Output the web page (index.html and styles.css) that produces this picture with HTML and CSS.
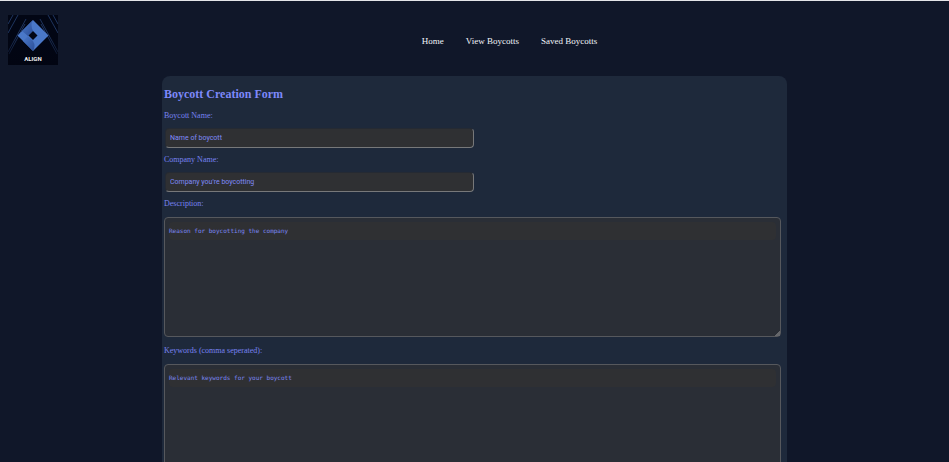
FILE: index.html
```
<!DOCTYPE html>
<html lang="en">
<head>
<meta charset="utf-8">
<meta name="viewport" content="width=device-width, initial-scale=1">
<title>Align</title>
<link rel="stylesheet" href="styles.css">
</head>
<body>
<header class="header">
  <a class="logo" href="#" aria-label="Home page">
    <svg viewBox="0 0 50 50" aria-hidden="true">
      <defs>
        <linearGradient id="fold" x1="0" y1="0" x2="1" y2="1"><stop offset="0" stop-color="#4a78c8"/><stop offset="1" stop-color="#2c4f98"/></linearGradient>
        <linearGradient id="fade" x1="0" y1="0" x2="0" y2="1"><stop offset="0" stop-color="#020512" stop-opacity="0"/><stop offset="1" stop-color="#020512"/></linearGradient>
      </defs>
      <rect width="50" height="50" fill="#020614"/>
      <g stroke="#1f355f" fill="none"><path d="M5 0L0 9M10 0L0 18M18 4L0 37M17 9L1 39M40 0l10 18M45 0l5 9M32 4l18 33M33 9l16 30"/></g>
      <rect y="20" width="50" height="30" fill="url(#fade)"/>
      <path fill="#4a78c8" d="M25 5L40.500 20.500L25 36L9.500 20.500Z"/>
      <path fill="url(#fold)" d="M25 5Q22 10 25 16L20 21L14 16Z"/>
      <path fill="url(#fold)" d="M20 21L25 26Q28 31 25 36L15 26Z"/>
      <path fill="#020614" d="M25 16L29.500 20.500L25 25L20.500 20.500Z"/>
      <text class="logo-text" x="25" y="46" text-anchor="middle">ALIGN</text>
    </svg>
  </a>
  <nav class="nav">
    <a href="#">Home</a>
    <a href="#">View Boycotts</a>
    <a href="#">Saved Boycotts</a>
  </nav>
</header>
<main class="card">
  <h1>Boycott Creation Form</h1>
  <form>
    <label for="name">Boycott Name:</label>
    <input id="name" type="text" placeholder="Name of boycott">
    <label for="company">Company Name:</label>
    <input id="company" type="text" placeholder="Company you're boycotting">
    <label for="description">Description:</label>
    <textarea id="description" placeholder="Reason for boycotting the company"></textarea>
    <label for="keywords">Keywords (comma seperated):</label>
    <textarea id="keywords" placeholder="Relevant keywords for your boycott"></textarea>
  </form>
</main>
</body>
</html>
```
FILE: styles.css
```
* { box-sizing: border-box; }
html { overflow: hidden; background: #101729; }
body {
  margin: 0;
  border-top: 1px solid #e4e5e8;
  background: #101729;
  font-family: "Liberation Serif", serif;
}
.header {
  display: flex;
  align-items: center;
  padding: 14px 8px 11px;
}
.logo { width: 50px; height: 50px; }
.logo svg { display: block; width: 100%; height: 100%; }
.logo-text { font: bold 6px Roboto, sans-serif; fill: #f0f0f0; }
.nav {
  flex: 1;
  display: flex;
  justify-content: center;
  gap: 22px;
  padding: 2px 0 0 20px;
}
.nav a { color: #f1f5f9; font-size: 9px; line-height: 12px; text-decoration: none; }
.card {
  margin: 0 162px;
  padding: 11px 6px 8px 2px;
  border-radius: 8px;
  background: #1e293b;
  color: #7d88fa;
}
h1 { margin: 0 0 9px; font-size: 12px; line-height: 14px; }
label { display: block; font-size: 8px; line-height: 12px; color: #7883f2; }
input, textarea {
  display: block;
  border-radius: 4px;
  color: #818cf8;
}
input {
  width: 50%;
  height: 20px;
  margin: 6px 1px;
  padding: 0 4px;
  border: 1px solid;
  border-color: #252a33 #77787a #77787a #252a33;
  background: #2f3033;
  font: 7px Roboto, sans-serif;
}
textarea {
  width: 100%;
  height: 120px;
  margin: 7px 0 8px;
  padding: 4px;
  border: 1px solid #56585d;
  background: #2a2e36;
  font: 6px/18px "DejaVu Sans Mono", monospace;
}
input::placeholder { color: #7f8af8; opacity: 1; }
textarea::placeholder {
  border-radius: 4px;
  background: #2f3033;
  color: #7c87f2;
  opacity: 1;
}
textarea::-webkit-resizer {
  background: linear-gradient(135deg, transparent 82%, #65676b 82%);
}
```
